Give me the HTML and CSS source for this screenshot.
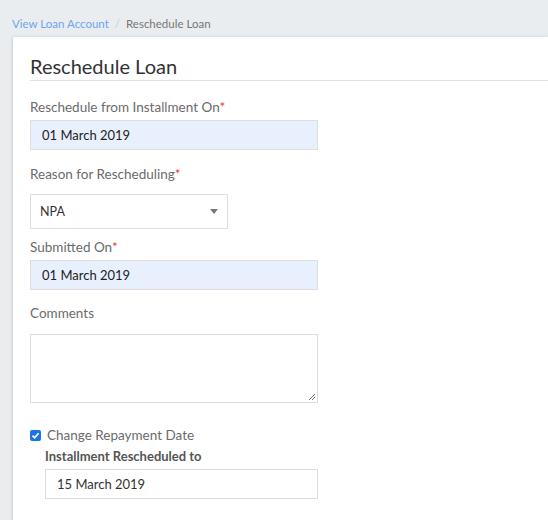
FILE: index.html
```html
<!DOCTYPE html>
<html>
<head>
<meta charset="utf-8">
<link rel="stylesheet" href="styles.css">
</head>
<body>
<nav class="crumbs">
  <a class="crumb-link" href="#">View Loan Account</a>
  <span class="crumb-sep">/</span>
  <span class="crumb-current">Reschedule Loan</span>
</nav>
<main class="card">
  <h1 class="title">Reschedule Loan</h1>
  <form class="form">
    <div class="field">
      <label class="label">Reschedule from Installment On<span class="req">*</span></label>
      <div class="input autofill">01 March 2019</div>
    </div>
    <div class="field field-select">
      <label class="label">Reason for Rescheduling<span class="req">*</span></label>
      <div class="select">
        <span>NPA</span>
        <span class="caret"></span>
      </div>
    </div>
    <div class="field">
      <label class="label">Submitted On<span class="req">*</span></label>
      <div class="input autofill">01 March 2019</div>
    </div>
    <div class="field field-comments">
      <label class="label label-alt">Comments</label>
      <div class="textarea">
        <svg class="grip" width="8" height="8" viewBox="0 0 8 8"><path d="M7 1L1 7M7 4L4 7" stroke="#777" stroke-width="1"/></svg>
      </div>
    </div>
    <div class="check-row">
      <span class="checkbox">
        <svg width="11" height="11" viewBox="0 0 11 11"><rect width="11" height="11" rx="2" fill="#1a73e8"/><path d="M2.5 5.7L4.6 7.8L8.6 3.2" stroke="#fff" stroke-width="1.7" fill="none"/></svg>
      </span>
      <span class="check-label">Change Repayment Date</span>
    </div>
    <div class="sub">
      <div class="sub-label">Installment Rescheduled to</div>
      <div class="input plain">15 March 2019</div>
    </div>
  </form>
</main>
</body>
</html>
```
FILE: styles.css
```css
html, body {
  margin: 0;
  padding: 0;
}
body {
  background: #e9edf0;
  font-family: Lato, "Noto Sans", sans-serif;
  color: #666;
  width: 548px;
  height: 520px;
  overflow: hidden;
}
.crumbs {
  padding: 16px 0 0 12px;
  height: 21px;
  font-size: 11.5px;
  line-height: 16px;
  display: flex;
  gap: 6px;
}
.crumb-link {
  color: #6ea4ec;
  text-decoration: none;
}
.crumb-sep {
  color: #ccc;
}
.crumb-current {
  color: #777;
}
.card {
  margin-left: 13px;
  background: #fff;
  box-shadow: -1px 0 3px rgba(0,0,0,0.12);
  padding: 17px 0 20px 17px;
  min-height: 460px;
}
.title {
  margin: 0;
  font-weight: 400;
  font-size: 20px;
  line-height: 24px;
  color: #333;
  padding-bottom: 2px;
  border-bottom: 1px solid #e0e0e0;
}
.form {
  padding-top: 17px;
}
.field {
  display: flex;
  flex-direction: column;
}
.label {
  font-size: 13.5px;
  line-height: 18px;
  color: #6b6b6b;
  margin-bottom: 4px;
}
.req {
  color: #e53935;
}
.input {
  width: 275px;
  height: 28px;
  border: 1px solid #dedede;
  font-size: 13px;
  line-height: 28px;
  padding-left: 11px;
  color: #222;
}
.autofill {
  background: #e8f0fe;
  margin-bottom: 15px;
}
.field-select .label {
  margin-bottom: 11px;
}
.select {
  width: 187px;
  height: 33px;
  border: 1px solid #dedede;
  padding: 0 0 0 9px;
  font-size: 12.5px;
  color: #333;
  display: flex;
  align-items: center;
  justify-content: space-between;
  margin-bottom: 9px;
}
.caret {
  width: 0;
  height: 0;
  border-left: 4px solid transparent;
  border-right: 4px solid transparent;
  border-top: 5px solid #777;
  margin-right: 9px;
}
.label-alt {
  font-family: Lato, sans-serif;
  margin-bottom: 12px;
  margin-top: -1px;
}
.textarea {
  position: relative;
  width: 286px;
  height: 67px;
  border: 1px solid #dedede;
  margin-bottom: 25px;
}
.grip {
  position: absolute;
  right: 1px;
  bottom: 1px;
}
.check-row {
  display: flex;
  align-items: center;
  gap: 6px;
  height: 14px;
}
.checkbox {
  display: flex;
  width: 11px;
  height: 11px;
}
.check-label {
  font-size: 13.5px;
  color: #6b6b6b;
}
.sub {
  padding-left: 15px;
  padding-top: 5px;
}
.sub-label {
  font-size: 13px;
  font-weight: 700;
  color: #555;
  line-height: 18px;
  margin-bottom: 4px;
}
.plain {
  width: 260px;
  background: #fff;
  color: #333;
}
```
